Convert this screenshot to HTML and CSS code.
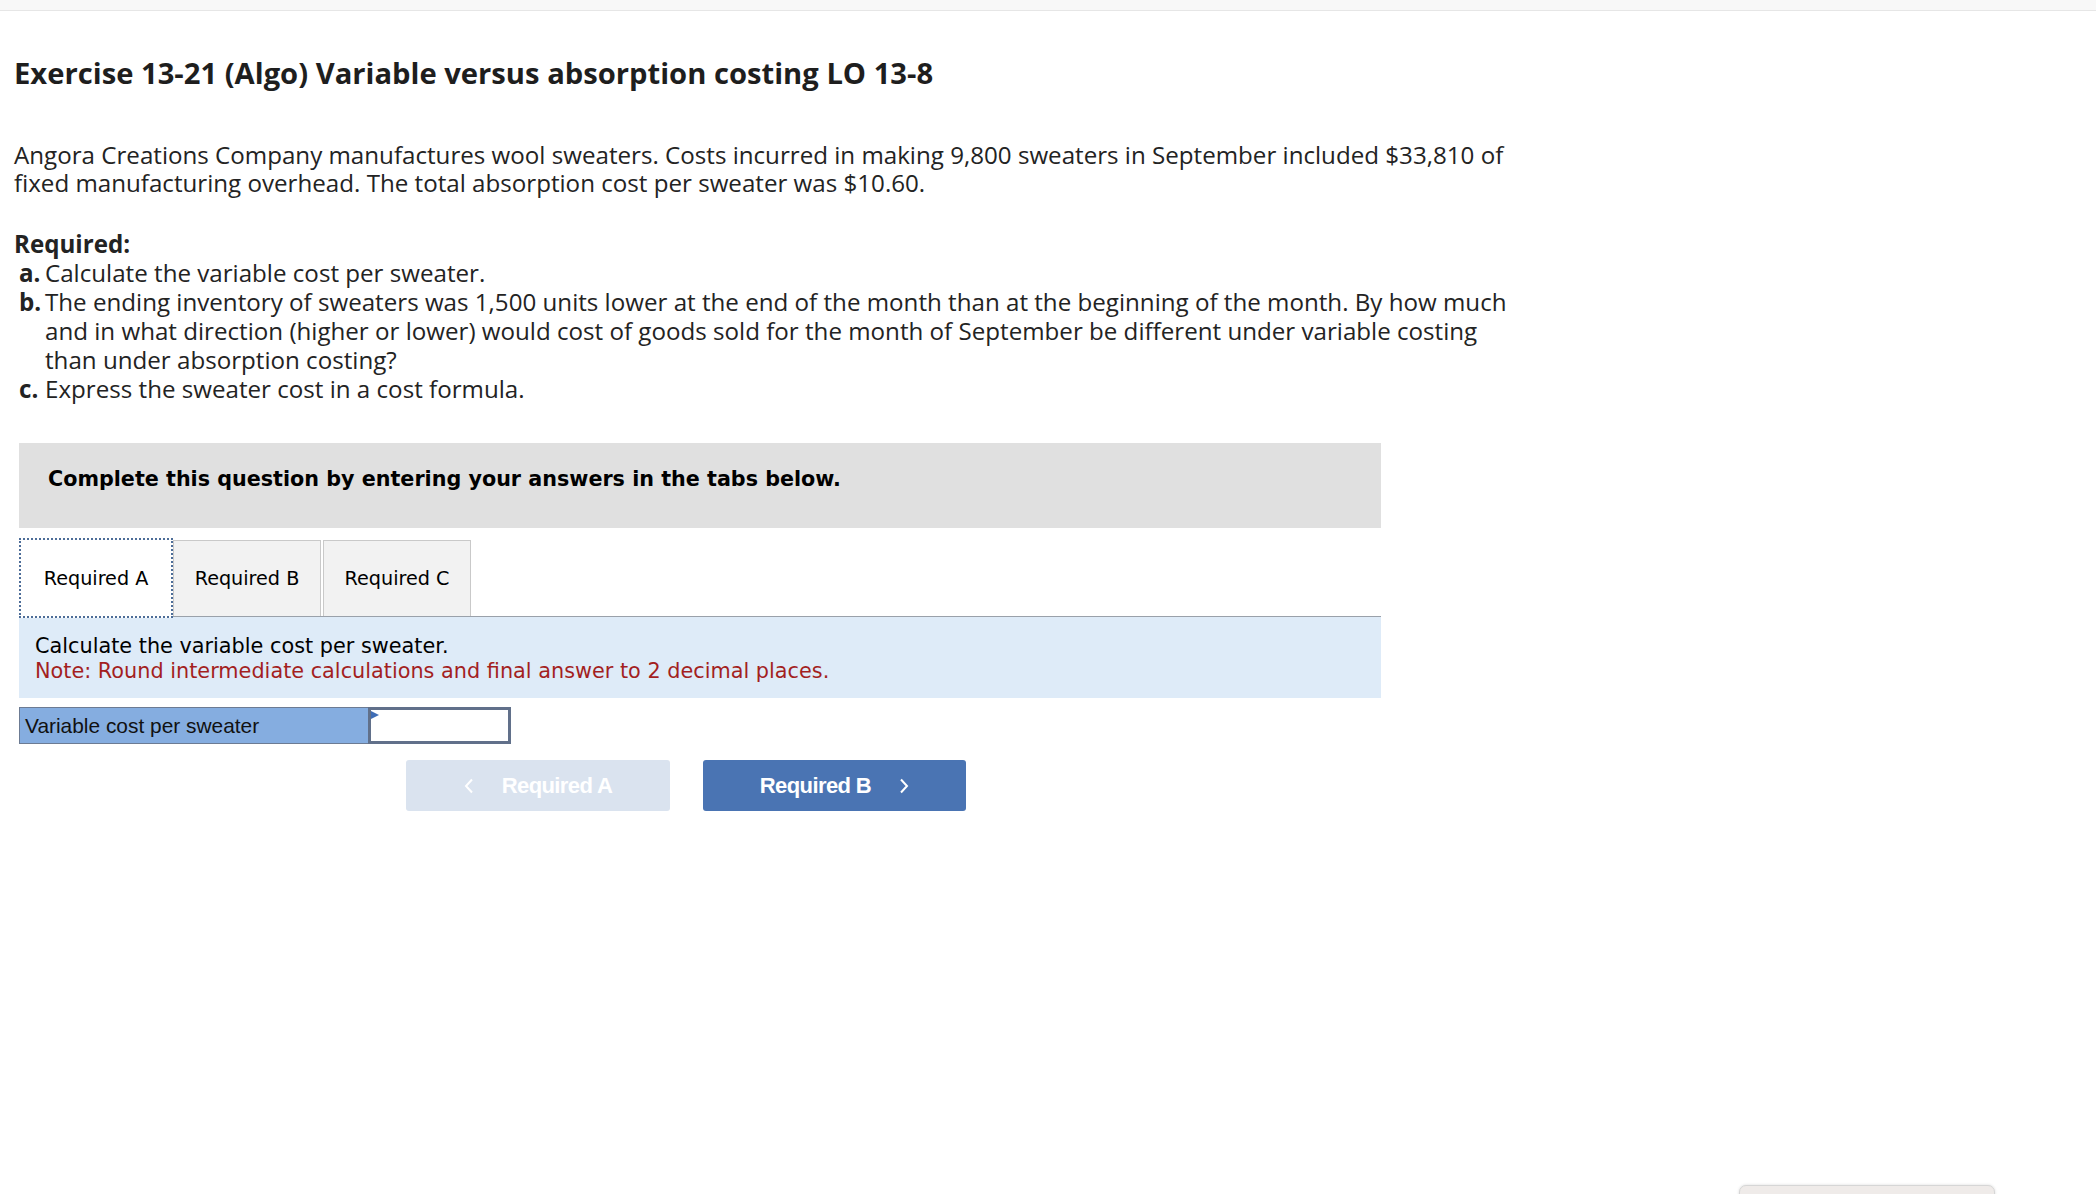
FILE: index.html
```html
<!DOCTYPE html>
<html lang="en">
<head>
<meta charset="utf-8">
<title>Exercise 13-21 (Algo)</title>
<link rel="stylesheet" href="styles.css">
</head>
<body>
<div class="topbar"></div>
<main class="page">
  <h1 class="title">Exercise 13-21 (Algo) Variable versus absorption costing LO 13-8</h1>
  <p class="intro">Angora Creations Company manufactures wool sweaters. Costs incurred in making 9,800 sweaters in September included $33,810 of fixed manufacturing overhead. The total absorption cost per sweater was $10.60.</p>
  <div class="required">
    <div class="req-head">Required:</div>
    <ol class="req-list">
      <li><span class="mk">a.</span><span class="tx">Calculate the variable cost per sweater.</span></li>
      <li><span class="mk">b.</span><span class="tx">The ending inventory of sweaters was 1,500 units lower at the end of the month than at the beginning of the month. By how much and in what direction (higher or lower) would cost of goods sold for the month of September be different under variable costing than under absorption costing?</span></li>
      <li><span class="mk">c.</span><span class="tx">Express the sweater cost in a cost formula.</span></li>
    </ol>
  </div>

  <section class="question">
    <div class="instructions">Complete this question by entering your answers in the tabs below.</div>
    <div class="tabs">
      <button class="tab active">Required A</button>
      <button class="tab">Required B</button>
      <button class="tab tab-c">Required C</button>
    </div>
    <div class="panel">
      <div class="panel-text">Calculate the variable cost per sweater.</div>
      <div class="note">Note: Round intermediate calculations and final answer to 2 decimal places.</div>
    </div>
    <div class="answer-row">
      <div class="label">Variable cost per sweater</div>
      <div class="input"><span class="flag"></span></div>
    </div>
    <div class="nav">
      <button class="nav-btn prev">
        <svg class="chev" width="10" height="16" viewBox="0 0 10 16"><path d="M8 1.5 L2 8 L8 14.5" fill="none" stroke="#fff" stroke-width="2"/></svg>
        <span>Required A</span>
      </button>
      <button class="nav-btn next">
        <span>Required B</span>
        <svg class="chev" width="10" height="16" viewBox="0 0 10 16"><path d="M2 1.5 L8 8 L2 14.5" fill="none" stroke="#fff" stroke-width="2"/></svg>
      </button>
    </div>
  </section>
</main>
<div class="widget"></div>
</body>
</html>
```
FILE: styles.css
```css
html, body {
  margin: 0;
  padding: 0;
  background: #ffffff;
}

body {
  font-family: "Open Sans", Lato, sans-serif;
  color: #222222;
  overflow: hidden;
}

.topbar {
  height: 10px;
  background: #f8f8f8;
  border-bottom: 1px solid #e6e6e6;
}

.page {
  padding-left: 14px;
}

.title {
  margin: 45px 0 0 0;
  font-size: 29.2px;
  line-height: 34px;
  font-weight: 700;
  color: #1e1e1e;
}

.intro {
  margin: 51px 0 0 0;
  width: 1525px;
  font-size: 24.15px;
  line-height: 28px;
  color: #232323;
}

.required {
  margin-top: 32px;
  font-size: 24.15px;
  line-height: 29px;
  color: #232323;
}

.req-head {
  font-weight: 700;
}

.req-list {
  list-style: none;
  margin: 0;
  padding: 0 0 0 5px;
  width: 1504px;
}

.req-list li {
  display: grid;
  grid-template-columns: 26px 1fr;
}

.req-list .mk {
  font-weight: 700;
}

.question {
  margin: 40px 0 0 5px;
  width: 1362px;
  font-family: "DejaVu Sans", Verdana, sans-serif;
  color: #000;
}

.instructions {
  height: 85px;
  box-sizing: border-box;
  padding: 24px 0 0 29px;
  background: #e0e0e0;
  font-size: 20.7px;
  line-height: 24px;
  font-weight: 700;
}

.tabs {
  display: flex;
  align-items: flex-end;
  margin-top: 10px;
  height: 78px;
  border-bottom: 1px solid #9aa1aa;
}

.tab {
  box-sizing: border-box;
  width: 148px;
  height: 76px;
  margin: 0;
  padding: 0;
  border: 1px solid #c9c9c9;
  border-bottom: none;
  background: #f2f2f2;
  font-family: "DejaVu Sans", Verdana, sans-serif;
  font-size: 19.2px;
  color: #000;
  display: flex;
  align-items: center;
  justify-content: center;
}

.tab.active {
  position: relative;
  z-index: 1;
  width: 154px;
  height: 80px;
  margin-bottom: -2px;
  border: 2px dotted #4d6d98;
  background: #ffffff;
}

.tab-c {
  margin-left: 2px;
}

.panel {
  background: #deebf8;
  padding: 17px 0 14px 16px;
  font-size: 20.8px;
  line-height: 25px;
}

.note {
  color: #a31f1f;
}

.answer-row {
  display: flex;
  margin-top: 9px;
  height: 37px;
}

.label {
  box-sizing: border-box;
  width: 349px;
  height: 37px;
  border: 1px solid #6c7b93;
  border-right: none;
  background: #85ade0;
  padding-left: 5px;
  display: flex;
  align-items: center;
  font-family: "Liberation Sans", Arial, sans-serif;
  font-size: 20.9px;
  color: #111;
}

.input {
  position: relative;
  box-sizing: border-box;
  width: 143px;
  height: 37px;
  border: 3px solid #61708a;
  background: #ffffff;
}

.flag {
  position: absolute;
  left: 0;
  top: 1px;
  width: 0;
  height: 0;
  border-left: 8px solid #3f6db5;
  border-top: 4.5px solid transparent;
  border-bottom: 4.5px solid transparent;
}

.nav {
  display: flex;
  gap: 33px;
  margin-top: 16px;
  padding-left: 387px;
}

.nav-btn {
  box-sizing: border-box;
  width: 264px;
  height: 51px;
  border: none;
  border-radius: 3px;
  display: flex;
  align-items: center;
  justify-content: center;
  gap: 28px;
  font-family: "Liberation Sans", Arial, sans-serif;
  font-size: 22px;
  letter-spacing: -0.6px;
  font-weight: 700;
  color: #ffffff;
  padding: 0;
}

.nav-btn.prev {
  background: #dae3ef;
}

.nav-btn.next {
  width: 263px;
  background: #4a74b3;
}

.widget {
  position: fixed;
  right: 101px;
  bottom: -30px;
  width: 256px;
  height: 39px;
  box-sizing: border-box;
  background: #efebe9;
  border: 1px solid #d6d6d6;
  border-radius: 7px;
  box-shadow: 0 0 3px rgba(0, 0, 0, 0.15);
}
```
